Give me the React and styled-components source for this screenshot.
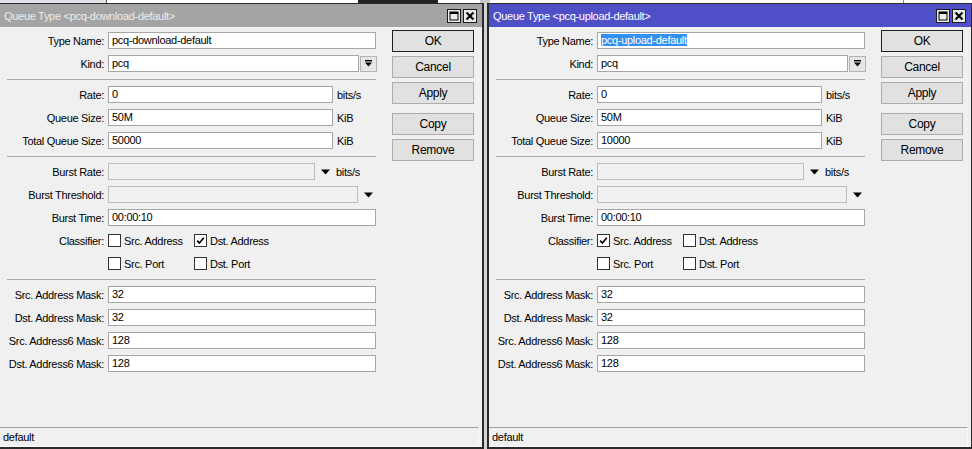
import React from 'react';
import styled, { createGlobalStyle } from 'styled-components';

const GlobalStyle = createGlobalStyle`
	html, body {
		margin: 0;
		padding: 0;
		background: #ffffff;
		overflow: hidden;
	}
	body {
		font-family: "Liberation Sans", Arial, sans-serif;
		font-size: 11px;
		letter-spacing: -0.3px;
		color: #000;
	}
`;

const Page = styled.div`
	width: 972px;
	height: 449px;
	overflow: hidden;
	display: flex;
	flex-direction: column;
`;

const TopStrip = styled.div`
	height: 3px;
	display: flex;
	flex: none;
`;

const Seg = styled.div`
	width: ${ props => props.$w }px;
	flex: ${ props => props.$grow ? 1 : 'none' };
	background: ${ props => props.$c };
`;

const Desktop = styled.div`
	flex: 1;
	display: flex;
	gap: 3px;
	background: #d4d4d4;
`;

const Window = styled.div`
	flex: none;
	width: 482px;
	margin-left: ${ props => props.$first ? '-2px' : '0' };
	border: solid #2a2a2a;
	border-width: 1px 2px 2px;
	background: #f0f0f0;
	display: flex;
	flex-direction: column;
`;

const TitleBar = styled.div`
	height: 23px;
	flex: none;
	display: flex;
	align-items: center;
	padding: 0 4px 0 4px;
	background: ${ props => props.$active ? '#4f4fc8' : '#a4a4a4' };
	color: ${ props => props.$active ? '#ffffff' : '#ececec' };
`;

const TitleText = styled.div`
	flex: 1;
	white-space: nowrap;
	padding-top: 1px;
`;

const TitleButtons = styled.div`
	display: flex;
	gap: 2px;
	margin-right: 1px;
`;

const TitleButton = styled.div`
	width: 12px;
	height: 12px;
	border: 1px solid #1a1a1a;
	background: #ebebeb;
	display: flex;
	align-items: center;
	justify-content: center;
`;

const Body = styled.div`
	flex: 1;
	display: flex;
	padding: 4px 8px 0 0;
	gap: 16px;
`;

const Form = styled.div`
	width: 376px;
	margin-top: 1px;
	display: flex;
	flex-direction: column;
`;

const Row = styled.div`
	display: grid;
	grid-template-columns: 104px 1fr;
	column-gap: 4px;
	height: 17px;
	margin-bottom: 6px;
	align-items: center;
`;

const Label = styled.div`
	text-align: right;
	white-space: nowrap;
`;

const Field = styled.div`
	display: flex;
	align-items: center;
	height: 17px;
`;

const Input = styled.div`
	box-sizing: border-box;
	width: ${ props => props.$w || 268 }px;
	height: 17px;
	flex: none;
	border: 1px solid ${ props => props.$disabled ? '#bdbdbd' : '#a6a6a6' };
	background: ${ props => props.$disabled ? '#f0f0f0' : '#ffffff' };
	padding: 0 3px;
	line-height: 15px;
	white-space: nowrap;
	overflow: hidden;
`;

const Selected = styled.span`
	background: #3390f0;
	color: #fff;
`;

const Unit = styled.span`
	margin-left: ${ props => props.$gap || 4 }px;
	white-space: nowrap;
`;

const DropButton = styled.div`
	box-sizing: border-box;
	width: 17px;
	height: 16px;
	margin-left: 1px;
	border: 1px solid #b4b4b4;
	background: #e6e6e6;
	display: flex;
	align-items: center;
	justify-content: center;
`;

const Arrow = styled.svg`
	flex: none;
	margin-left: ${ props => props.$gap || 6 }px;
`;

const Separator = styled.div`
	height: 1px;
	margin: 1px 0 6px 7px;
	background: #a9a9a9;
`;

const CheckGrid = styled.div`
	display: grid;
	grid-template-columns: 86px 86px;
`;

const CheckItem = styled.div`
	display: flex;
	align-items: center;
	gap: 3px;
	white-space: nowrap;
`;

const Box = styled.div`
	box-sizing: border-box;
	width: 13px;
	height: 13px;
	border: 1px solid #333333;
	background: #ffffff;
	display: flex;
	align-items: center;
	justify-content: center;
`;

const ButtonCol = styled.div`
	width: 82px;
	margin-top: -1px;
	display: flex;
	flex-direction: column;
`;

const Button = styled.div`
	box-sizing: border-box;
	height: 22px;
	margin-bottom: 4px;
	margin-top: ${ props => props.$spaced ? '5px' : '0' };
	border: 1px solid ${ props => props.$default ? '#1e1e1e' : '#adadad' };
	background: #e1e1e1;
	display: flex;
	align-items: center;
	justify-content: center;
	font-size: 12px;
`;

const StatusBar = styled.div`
	height: 20px;
	flex: none;
	margin-right: 3px;
	border-top: 1px solid #a0a0a0;
	border-right: 1px solid #fbfbfb;
	border-bottom: 1px solid #fbfbfb;
	box-sizing: border-box;
	display: flex;
	align-items: center;
	padding-left: 3px;
	padding-bottom: 1px;
`;

const MaxIcon = () => (
	<svg width="10" height="10" viewBox="0 0 10 10">
		<rect x="1" y="1" width="8" height="8" fill="none" stroke="#000" strokeWidth="1" />
		<rect x="1" y="1" width="8" height="2" fill="#000" />
	</svg>
);

const CloseIcon = () => (
	<svg width="10" height="10" viewBox="0 0 10 10">
		<path d="M1.5 1.5 L8.5 8.5 M8.5 1.5 L1.5 8.5" stroke="#000" strokeWidth="2.2" />
	</svg>
);

const DownBarIcon = () => (
	<svg width="9" height="9" viewBox="0 0 9 9">
		<rect x="1" y="1" width="7" height="1.4" fill="#000" />
		<path d="M1 3.5 H8 L4.5 7.5 Z" fill="#000" />
	</svg>
);

const Triangle = ({ gap }) => (
	<Arrow $gap={gap} width="9" height="6" viewBox="0 0 9 6">
		<path d="M0 0.5 H9 L4.5 5.5 Z" fill="#000" />
	</Arrow>
);

const Check = ({ checked, label }) => (
	<CheckItem>
		<Box>
			{checked && (
				<svg width="11" height="11" viewBox="0 0 11 11">
					<path d="M2.2 5.6 L4.4 8 L8.8 2.8" fill="none" stroke="#000" strokeWidth="1.7" />
				</svg>
			)}
		</Box>
		{label}
	</CheckItem>
);

const QueueWindow = ({ first, active, name, totalSize, srcChecked, dstChecked }) => (
	<Window $first={first}>
		<TitleBar $active={active}>
			<TitleText>Queue Type &lt;{name}&gt;</TitleText>
			<TitleButtons>
				<TitleButton><MaxIcon /></TitleButton>
				<TitleButton><CloseIcon /></TitleButton>
			</TitleButtons>
		</TitleBar>
		<Body>
			<Form>
				<Row>
					<Label>Type Name:</Label>
					<Field>
						<Input>{active ? <Selected>{name}</Selected> : name}</Input>
					</Field>
				</Row>
				<Row>
					<Label>Kind:</Label>
					<Field>
						<Input $w={251}>pcq</Input>
						<DropButton><DownBarIcon /></DropButton>
					</Field>
				</Row>
				<Separator />
				<Row>
					<Label>Rate:</Label>
					<Field>
						<Input $w={225}>0</Input>
						<Unit>bits/s</Unit>
					</Field>
				</Row>
				<Row>
					<Label>Queue Size:</Label>
					<Field>
						<Input $w={225}>50M</Input>
						<Unit>KiB</Unit>
					</Field>
				</Row>
				<Row>
					<Label>Total Queue Size:</Label>
					<Field>
						<Input $w={225}>{totalSize}</Input>
						<Unit>KiB</Unit>
					</Field>
				</Row>
				<Separator />
				<Row>
					<Label>Burst Rate:</Label>
					<Field>
						<Input $w={207} $disabled />
						<Triangle gap={6} />
						<Unit $gap={6}>bits/s</Unit>
					</Field>
				</Row>
				<Row>
					<Label>Burst Threshold:</Label>
					<Field>
						<Input $w={250} $disabled />
						<Triangle gap={6} />
					</Field>
				</Row>
				<Row>
					<Label>Burst Time:</Label>
					<Field>
						<Input>00:00:10</Input>
					</Field>
				</Row>
				<Row>
					<Label>Classifier:</Label>
					<CheckGrid>
						<Check checked={srcChecked} label="Src. Address" />
						<Check checked={dstChecked} label="Dst. Address" />
					</CheckGrid>
				</Row>
				<Row>
					<Label />
					<CheckGrid>
						<Check label="Src. Port" />
						<Check label="Dst. Port" />
					</CheckGrid>
				</Row>
				<Separator />
				<Row>
					<Label>Src. Address Mask:</Label>
					<Field><Input>32</Input></Field>
				</Row>
				<Row>
					<Label>Dst. Address Mask:</Label>
					<Field><Input>32</Input></Field>
				</Row>
				<Row>
					<Label>Src. Address6 Mask:</Label>
					<Field><Input>128</Input></Field>
				</Row>
				<Row>
					<Label>Dst. Address6 Mask:</Label>
					<Field><Input>128</Input></Field>
				</Row>
			</Form>
			<ButtonCol>
				<Button $default>OK</Button>
				<Button>Cancel</Button>
				<Button>Apply</Button>
				<Button $spaced>Copy</Button>
				<Button>Remove</Button>
			</ButtonCol>
		</Body>
		<StatusBar>default</StatusBar>
	</Window>
);

const App = () => (
	<>
		<GlobalStyle />
		<Page>
			<TopStrip>
				<Seg $w={106} $c="#dfe3e8" />
				<Seg $w={1} $c="#555" />
				<Seg $w={251} $c="#ffffff" />
				<Seg $w={80} $c="#222" />
				<Seg $w={42} $c="#ffffff" />
				<Seg $w={10} $c="#c8c8c8" />
				<Seg $w={413} $c="#ffffff" />
				<Seg $w={1} $c="#888" />
				<Seg $grow $c="#ffffff" />
			</TopStrip>
			<Desktop>
				<QueueWindow
					first
					name="pcq-download-default"
					totalSize="50000"
					dstChecked
				/>
				<QueueWindow
					active
					name="pcq-upload-default"
					totalSize="10000"
					srcChecked
				/>
			</Desktop>
		</Page>
	</>
);

export default App;
